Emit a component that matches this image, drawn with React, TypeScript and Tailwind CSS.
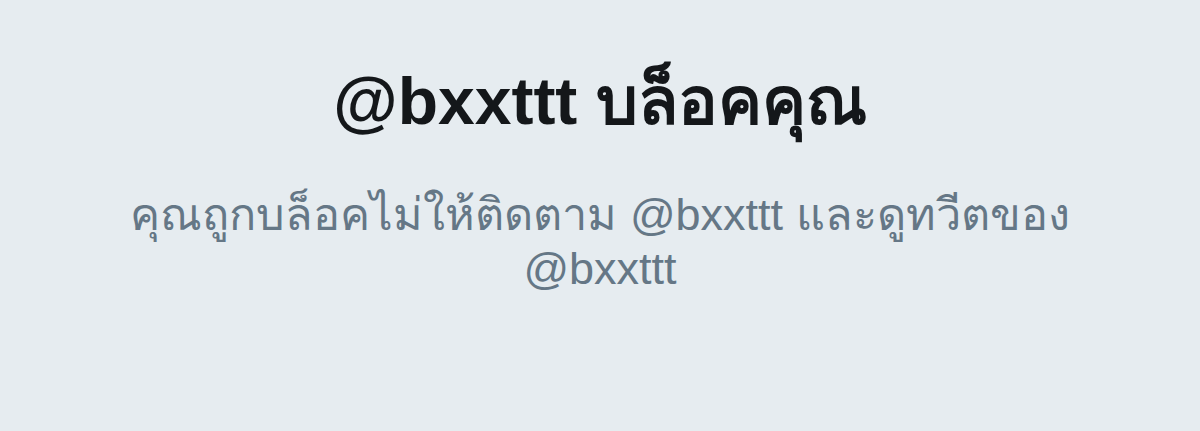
export default function App() {
  return (
    <div className="w-[1200px] h-[431px] bg-[#e6ecf0] flex flex-col items-center" style={{ fontFamily: '"Liberation Sans", "Noto Sans", sans-serif' }}>
      <h1 className="mt-[61px] text-[66px] leading-[80px] font-bold text-[#14171a] text-center whitespace-nowrap">@bxxttt บล็อคคุณ</h1>
      <p className="mt-[47px] w-[960px] text-[45px] leading-[54px] text-[#657786] text-center">คุณถูกบล็อคไม่ให้ติดตาม @bxxttt และดูทวีตของ @bxxttt</p>
    </div>
  );
}
